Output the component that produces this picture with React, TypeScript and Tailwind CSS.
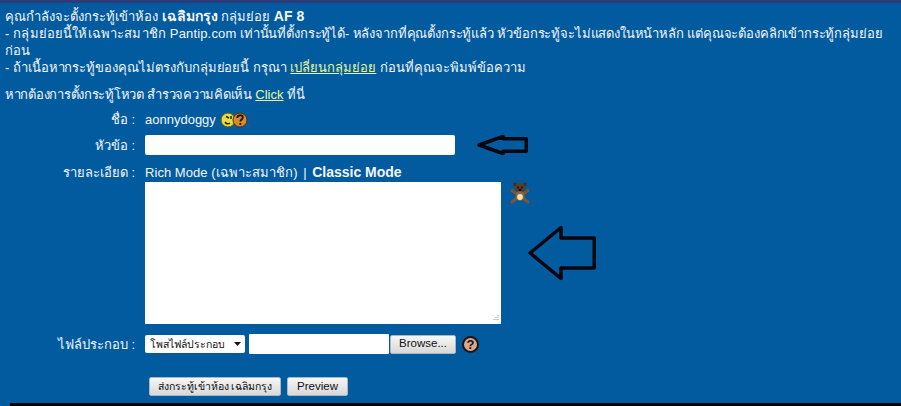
const font = { fontFamily: '"Liberation Sans", "Noto Sans", sans-serif' };

function Label({ children }: { children: React.ReactNode }) {
  return <div className="w-[136px] pr-[1px] text-right shrink-0 whitespace-nowrap">{children}</div>;
}

function Smiley() {
  return (
    <svg width="28" height="16" viewBox="0 0 28 16">
      <circle cx="8" cy="8" r="7" fill="#e8dc3a" stroke="#5a5a28" strokeWidth="1" />
      <path d="M6 4.500l3 1.500M11 4v3M10 11q-3 2-5-1" stroke="#222" strokeWidth="1.500" fill="none" />
      <circle cx="20" cy="8" r="7" fill="#d98a2b" stroke="#4a3010" strokeWidth="1" />
      <path d="M17.200 6q.3-2.800 2.900-2.800 2.800 0 2.700 2.400c0 1.800-2.400 2-2.400 3.800" stroke="#1c1408" strokeWidth="1.900" fill="none" />
      <rect x="19.400" y="11" width="1.900" height="1.900" fill="#1c1408" />
    </svg>
  );
}

function Bear() {
  return (
    <svg width="22" height="22" viewBox="0 0 22 22">
      <path d="M8 12L2 8M14 12l6-4M8 16l-6 5M14 16l6 5" stroke="#7a5535" strokeWidth="3" fill="none" />
      <circle cx="6" cy="2.500" r="2" fill="#4a3020" />
      <circle cx="16" cy="2.500" r="2" fill="#4a3020" />
      <circle cx="11" cy="6" r="5" fill="#5b3d28" />
      <ellipse cx="11" cy="14" rx="4.500" ry="5" fill="#8a6540" />
      <ellipse cx="11" cy="15" rx="2.800" ry="3" fill="#f0e2c0" />
      <circle cx="9" cy="5.500" r="1" fill="#111" />
      <circle cx="13" cy="5.500" r="1" fill="#111" />
      <ellipse cx="11" cy="8" rx="1.600" ry="1.200" fill="#111" />
    </svg>
  );
}

function Arrow({ w, h, sw, headW }: { w: number; h: number; sw: number; headW: number }) {
  const shaftTop = h * 0.24;
  const shaftBottom = h * 0.76;
  return (
    <svg width={w} height={h} viewBox={`0 0 ${w} ${h}`} className="block">
      <path
        d={`M${sw * 0.6} ${h / 2}L${headW} ${sw}V${shaftTop}H${w - sw / 2}V${shaftBottom}H${headW}V${h - sw}Z`}
        fill="none"
        stroke="#06060e"
        strokeWidth={sw}
        strokeLinejoin="round"
      />
    </svg>
  );
}

function Help() {
  return (
    <div className="w-[17px] h-[17px] rounded-full bg-[#d9a890] border-2 border-[#201510] flex items-center justify-center text-[13px] font-bold text-[#111] leading-none">
      ?
    </div>
  );
}

function GrayButton({ children, className }: { children: React.ReactNode; className: string }) {
  return (
    <button className={`h-[19px] rounded-[2px] border border-[#a9b6c4] bg-gradient-to-b from-[#f7f7f7] to-[#d8d8d8] leading-none text-[#111] ${className}`}>
      {children}
    </button>
  );
}

export default function App() {
  return (
    <div style={font} className="w-[901px] h-[406px] overflow-hidden flex flex-col bg-[#035b9f] text-[13px] leading-[17px] text-[#f2f6fa] border-t-[3px] border-[#2c3a78]">
      <div className="flex-1 pl-[5px] pt-[5px]">
        <div className="h-[17px] whitespace-nowrap">
          คุณกำลังจะตั้งกระทู้เข้าห้อง <b className="text-[14px]">เฉลิมกรุง</b> กลุ่มย่อย <b className="text-[14px]">AF 8</b>
        </div>
        <div className="whitespace-nowrap">
          <span className="tracking-[0.15px]">- กลุ่มย่อยนี้ให้เฉพาะสมาชิก Pantip.com</span>{' '}
          <span className="tracking-[-0.15px]">เท่านั้นที่ตั้งกระทู้ได้- หลังจากที่คุณตั้งกระทู้แล้ว หัวข้อกระทู้จะไม่แสดงในหน้าหลัก แต่คุณจะต้องคลิกเข้ากระทู้กลุ่มย่อย</span>
          <br />
          ก่อน
        </div>
        <div className="whitespace-nowrap">
          <span className="tracking-[-0.05px]">- ถ้าเนื้อหากระทู้ของคุณไม่ตรงกับกลุ่มย่อยนี้ กรุณา</span> <a className="underline text-[#e6f59a]">เปลี่ยนกลุ่มย่อย</a> ก่อนที่คุณจะพิมพ์ข้อความ
        </div>
        <div className="mt-[10px] whitespace-nowrap">
          <span className="tracking-[-0.27px]">หากต้องการตั้งกระทู้โหวต สำรวจความคิดเห็น</span> <a className="underline text-[#e6f59a]">Click</a> ที่นี่
        </div>

        <div className="-ml-[5px] mt-[8px] flex items-center h-[17px]">
          <Label>ชื่อ :</Label>
          <div className="ml-[9px] flex items-center gap-[4px]">
            aonnydoggy <Smiley />
          </div>
        </div>

        <div className="-ml-[5px] mt-[5px] flex items-center h-[24px]">
          <Label>หัวข้อ :</Label>
          <div className="ml-[9px] w-[310px] h-[20px] bg-white rounded-[2px]" />
          <div className="ml-[22px]">
            <Arrow w={51} h={24} sw={3.500} headW={26} />
          </div>
        </div>

        <div className="-ml-[5px] mt-[7px] flex">
          <Label>รายละเอียด :</Label>
          <div className="ml-[9px]">
            <div className="h-[18px] whitespace-nowrap">
              <span className="tracking-[0.05px]">Rich Mode (เฉพาะสมาชิก)</span> <span className="ml-[2px]">|</span> <b className="ml-[2px] text-[14px]">Classic Mode</b>
            </div>
            <div className="flex">
              <div className="relative w-[356px] h-[142px] bg-white">
                <svg width="8" height="8" viewBox="0 0 8 8" className="absolute right-[2px] bottom-[2px]">
                  <path d="M7 1v1M5 3v1M7 3v1M3 5v1M5 5v1M7 5v1" stroke="#999" strokeWidth="1" />
                </svg>
              </div>
              <div className="ml-[8px]">
                <Bear />
                <div className="mt-[20px] ml-[19px]">
                  <Arrow w={68} h={58} sw={3.500} headW={33} />
                </div>
              </div>
            </div>
          </div>
        </div>

        <div className="-ml-[5px] mt-[10px] flex items-center">
          <Label>ไฟล์ประกอบ :</Label>
          <div className="ml-[9px] w-[100px] h-[18px] bg-white rounded-[2px] text-[#111] text-[10.500px] flex items-center justify-between pl-[5px] pr-[4px]">
            <span className="whitespace-nowrap">โพสไฟล์ประกอบ</span>
            <svg width="7" height="4" viewBox="0 0 7 4"><path d="M0 0h7L3.500 4z" fill="#111" /></svg>
          </div>
          <div className="ml-[4px] w-[140px] h-[20px] bg-white rounded-[1px]" />
          <GrayButton className="ml-[1px] w-[66px] text-[11.500px]">Browse...</GrayButton>
          <div className="ml-[6px]">
            <Help />
          </div>
        </div>

        <div className="ml-[144px] mt-[23px] flex gap-[6px]">
          <GrayButton className="w-[132px] whitespace-nowrap text-[10.500px]">ส่งกระทู้เข้าห้อง เฉลิมกรุง</GrayButton>
          <GrayButton className="w-[61px] text-[11.500px]">Preview</GrayButton>
        </div>
      </div>
      <div className="h-[3px] ml-[10px] bg-black shrink-0" />
    </div>
  );
}
